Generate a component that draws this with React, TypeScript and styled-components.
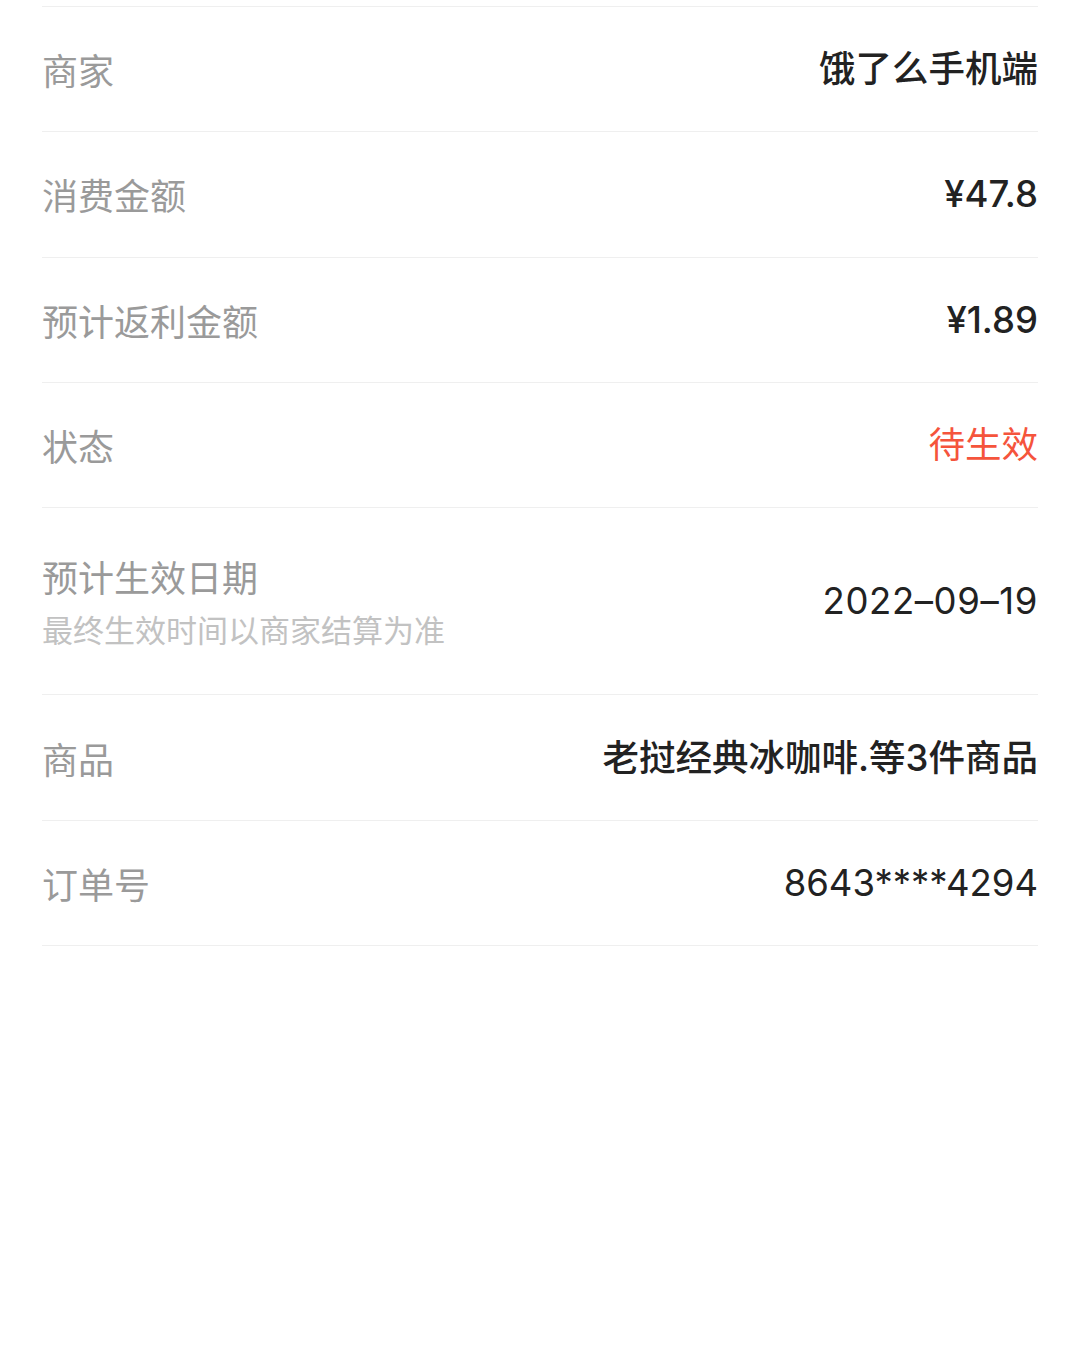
import React from "react";
import styled, { createGlobalStyle } from "styled-components";

const Global = createGlobalStyle`
  html, body { margin: 0; padding: 0; background: #fff; }
  body { font-family: "Inter", "Noto Sans CJK SC", sans-serif; -webkit-font-smoothing: antialiased; }
`;

const Page = styled.div`
  width: 1080px;
  min-height: 1350px;
  box-sizing: border-box;
  padding: 6px 42px 0 42px;
  background: #fff;
`;

const List = styled.div`
  display: flex;
  flex-direction: column;
  border-top: 1px solid #efefef;
`;

const Row = styled.div<{ $tall?: boolean }>`
  display: flex;
  align-items: center;
  justify-content: space-between;
  height: ${(p) => (p.$tall ? 186.2 : 124.3)}px;
  border-bottom: 1px solid #efefef;
`;

const LabelBlock = styled.div`
  display: flex;
  flex-direction: column;
`;

const Label = styled.div`
  font-family: "Noto Sans CJK SC", sans-serif;
  font-size: 36px;
  line-height: 50px;
  color: #9a9a9a;
  font-weight: 400;
`;

const Sub = styled.div`
  font-family: "Noto Sans CJK SC", sans-serif;
  font-size: 31px;
  line-height: 44px;
  margin-top: 6px;
  color: #c2c2c2;
`;

const Value = styled.div<{ $color?: string; $weight?: number; $spacing?: number }>`
  font-size: 36.5px;
  line-height: 50px;
  color: ${(p) => p.$color || "#222"};
  font-weight: ${(p) => p.$weight ?? 500};
  letter-spacing: ${(p) => p.$spacing ?? 0}px;
  text-align: right;
`;

export default function App() {
  return (
    <>
      <Global />
      <Page>
        <List>
          <Row>
            <Label>商家</Label>
            <Value>饿了么手机端</Value>
          </Row>
          <Row>
            <Label>消费金额</Label>
            <Value>¥47.8</Value>
          </Row>
          <Row>
            <Label>预计返利金额</Label>
            <Value>¥1.89</Value>
          </Row>
          <Row>
            <Label>状态</Label>
            <Value $color="#f5543c" $weight={400}>待生效</Value>
          </Row>
          <Row $tall>
            <LabelBlock>
              <Label>预计生效日期</Label>
              <Sub>最终生效时间以商家结算为准</Sub>
            </LabelBlock>
            <Value $weight={400} $spacing={0.6}>2022–09–19</Value>
          </Row>
          <Row>
            <Label>商品</Label>
            <Value>老挝经典冰咖啡.等3件商品</Value>
          </Row>
          <Row>
            <Label>订单号</Label>
            <Value $weight={400}>8643****4294</Value>
          </Row>
        </List>
      </Page>
    </>
  );
}
